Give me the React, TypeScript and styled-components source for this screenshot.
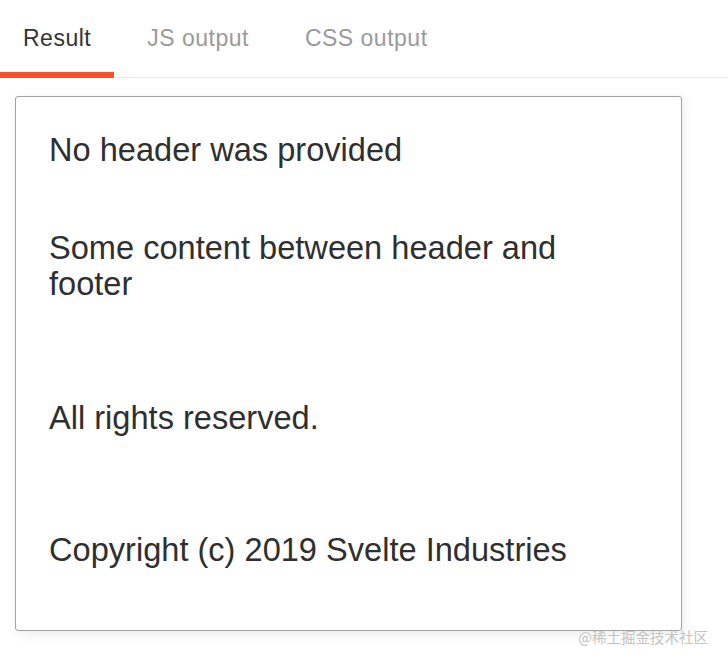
import styled, { createGlobalStyle } from "styled-components";

const GlobalStyle = createGlobalStyle`
  body {
    margin: 0;
    background: #ffffff;
    font-family: "Liberation Sans", Arial, sans-serif;
  }
`;

const tabs = ["Result", "JS output", "CSS output"];

const App = () => {
  return (
    <>
      <GlobalStyle />
      <Page>
        <TabBar>
          {tabs.map((tab, i) => (
            <Tab key={tab} $active={i === 0}>
              {tab}
            </Tab>
          ))}
        </TabBar>

        <Main>
          <Card>
            <Header>No header was provided</Header>
            <Content>Some content between header and footer</Content>
            <Footer>
              <FooterLine>All rights reserved.</FooterLine>
              <FooterLine>Copyright (c) 2019 Svelte Industries</FooterLine>
            </Footer>
          </Card>
        </Main>

        <Watermark>@稀土掘金技术社区</Watermark>
      </Page>
    </>
  );
};

export default App;

const Page = styled.div`
  position: relative;
  width: 728px;
  height: 664px;
  overflow: hidden;
`;

const TabBar = styled.nav`
  display: flex;
  gap: 10px;
  border-bottom: 1px solid #ececec;
`;

const Tab = styled.div<{ $active?: boolean }>`
  padding: 26px 23px 22px;
  font-size: 23px;
  line-height: 24px;
  letter-spacing: 0.5px;
  color: ${({ $active }) => ($active ? "#333333" : "#9a9a9a")};
  border-bottom: 6px solid ${({ $active }) => ($active ? "#f2532a" : "transparent")};
  margin-bottom: -1px;
  white-space: nowrap;
`;

const Main = styled.main`
  padding: 18px 46px 0 15px;
`;

const Card = styled.section`
  box-sizing: border-box;
  width: 667px;
  height: 535px;
  padding: 35px 32px 0 33px;
  border: 1.5px solid #a2a2a2;
  border-radius: 3px;
  box-shadow: 2px 3px 12px rgba(0, 0, 0, 0.08);
  color: #2f2f2f;
  font-size: 32.6px;
  line-height: 36px;
`;

const Header = styled.div`
  margin-bottom: 62px;
`;

const Content = styled.p`
  margin: 0 0 98px;
  max-width: 540px;
`;

const Footer = styled.footer`
  display: flex;
  flex-direction: column;
  gap: 96px;
`;

const FooterLine = styled.p`
  margin: 0;
`;

const Watermark = styled.div`
  position: absolute;
  right: 20px;
  top: 627px;
  font-family: "Noto Sans CJK SC", sans-serif;
  font-size: 14.5px;
  line-height: 20px;
  color: #c4c4c4;
`;
